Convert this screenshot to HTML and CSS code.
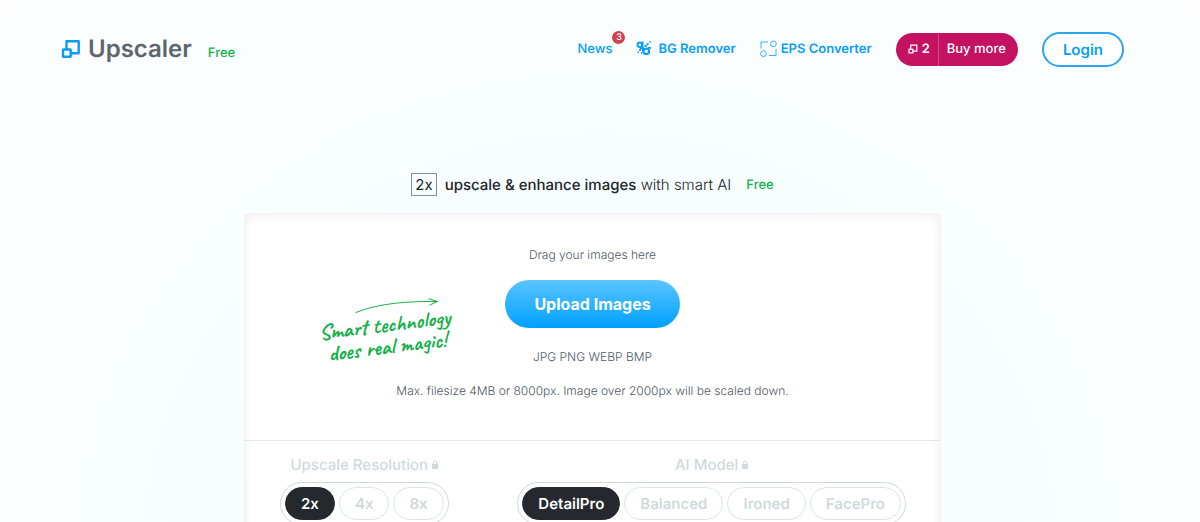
FILE: index.html
```
<!DOCTYPE html>
<html lang="en">

	<head>
		<meta charset="utf-8">
		<meta name="viewport" content="width=device-width, initial-scale=1">
		<title>Upscaler</title>
		<link rel="stylesheet" href="styles.css">
	</head>

	<body>

		<header class="header">
			<a class="logo" href="#">
				<svg class="logo-icon" viewBox="0 0 20 20" width="20" height="20" fill="none" stroke="currentColor" stroke-width="2.4" stroke-linejoin="round" aria-hidden="true">
					<path d="M5.500 10.500V2.300h12.200v12H9.700"/>
					<rect x="2" y="10.500" width="7.700" height="7.200" rx=".5"/>
				</svg>
				<span class="logo-name">Upscaler</span>
				<span class="free">Free</span>
			</a>

			<nav class="nav">
				<a class="nav-link news" href="#">News<span class="badge">3</span></a>
				<a class="nav-link remover" href="#">
					<svg viewBox="0 0 16 18" width="16" height="18" fill="none" stroke="currentColor" aria-hidden="true">
						<circle cx="3.800" cy="4.800" r="2.300" stroke-width="1.900"/>
						<circle cx="10.300" cy="11.300" r="2.800" stroke-width="2.100"/>
						<path d="M6.600 1.500V11M4 8.200h4" stroke-width="1.800"/>
						<path d="M8.500 5h2v2h-2zM10.500 3.200h2v2h-2zM13.200 1h1.500v1.500h-1.500zM12 7h3v1.800h-3zM3 8.800h2v2H3zM1.500 11.500H3V13H1.500zM5 12h1.500v1.500H5z" fill="currentColor" stroke="none"/>
					</svg>
					BG Remover
				</a>
				<a class="nav-link eps" href="#">
					<svg viewBox="0 0 17 18" width="17" height="18" fill="none" stroke="currentColor" stroke-width=".8" aria-hidden="true">
						<circle cx="13.400" cy="3.800" r="2.900"/>
						<circle cx="3.500" cy="13.600" r="2.900"/>
						<path d="M1 8.500v-6.500h7M16 9v6.500H9"/>
					</svg>
					EPS Converter
				</a>
				<a class="buy" href="#">
					<span class="credits">
						<svg viewBox="0 0 20 20" width="10" height="10" fill="none" stroke="currentColor" stroke-width="2.400" aria-hidden="true">
							<path d="M5.500 10.500V2.300h12.200v12H9.700"/>
							<rect x="2" y="10.500" width="7.700" height="7.200"/>
						</svg>
						2
					</span>
					<span class="buy-text">Buy more</span>
				</a>
				<a class="login" href="#">Login</a>
			</nav>
		</header>

		<main class="main">
			<h1 class="title">
				<span class="factor">2x</span>
				<span class="tagline"><strong>upscale &amp; enhance images</strong> with smart AI</span>
				<span class="free">Free</span>
			</h1>

			<form class="card">
				<div class="drop">
					<p>Drag your images here</p>
					<button class="upload" type="button">Upload Images</button>
					<p>JPG PNG WEBP BMP</p>
					<p>Max. filesize 4MB or 8000px. Image over 2000px will be scaled down.</p>

					<div class="magic">
						<svg viewBox="0 0 84 16" width="84" height="16" fill="none" stroke="currentColor" stroke-linecap="round" aria-hidden="true">
							<path d="M1 14.500C19 7 45 3 82 3.500M74 .8l8.500 2.700-7.500 3.500"/>
						</svg>
						<p class="magic-text">Smart technology<br>does real magic!</p>
					</div>
				</div>

				<div class="options">
					<div class="option" role="radiogroup" aria-labelledby="resolution">
						<h2 class="option-name" id="resolution">
							Upscale Resolution
							<svg viewBox="0 0 6 10" width="6" height="10" aria-hidden="true"><path d="M0 4h6v5H0z" fill="currentColor"/><path d="M1.300 4V2.800a1.700 1.700 0 0 1 3.400 0V4" fill="none" stroke="currentColor"/></svg>
						</h2>
						<div class="pills">
							<label class="pill"><input type="radio" name="resolution" checked><span>2x</span></label>
							<label class="pill"><input type="radio" name="resolution" disabled><span>4x</span></label>
							<label class="pill"><input type="radio" name="resolution" disabled><span>8x</span></label>
						</div>
					</div>

					<div class="option" role="radiogroup" aria-labelledby="model">
						<h2 class="option-name" id="model">
							AI Model
							<svg viewBox="0 0 6 10" width="6" height="10" aria-hidden="true"><path d="M0 4h6v5H0z" fill="currentColor"/><path d="M1.300 4V2.800a1.700 1.700 0 0 1 3.400 0V4" fill="none" stroke="currentColor"/></svg>
						</h2>
						<div class="pills">
							<label class="pill"><input type="radio" name="model" checked><span>DetailPro</span></label>
							<label class="pill"><input type="radio" name="model" disabled><span>Balanced</span></label>
							<label class="pill"><input type="radio" name="model" disabled><span>Ironed</span></label>
							<label class="pill"><input type="radio" name="model" disabled><span>FacePro</span></label>
						</div>
					</div>
				</div>
			</form>
		</main>

	</body>

</html>
```

FILE: styles.css
```
* {margin:0; padding:0; box-sizing:border-box;}
body {min-height:100vh; padding-right:15px; font:12px/20px Inter,"Liberation Sans",sans-serif; text-rendering:geometricPrecision; color:#4e5863; background:#fff radial-gradient(ellipse at 50% 100%, #f6fdff 0%, #f9feff 60%, #fefeff 100%);}
a {color:#0a9df8; text-decoration:none;}
svg {flex:none;}
.free {font-size:13px; font-weight:500; color:#16b04a;}

/* header */
.header {display:flex; align-items:center; justify-content:space-between; padding:31px 61px 0;}
.logo {display:flex; align-items:baseline;}
.logo-icon {align-self:center;}
.logo-name {margin:0 16px 0 7px; font-size:24px; line-height:36px; font-weight:600; color:#5d666f;}
.nav {display:flex; align-items:center; gap:24px;}
.nav-link {display:flex; align-items:center; gap:4px; font-size:13px; font-weight:600;}
.news {position:relative; font-weight:500;}
.remover {gap:6px;}
.badge {position:absolute; top:-8px; right:-13px; width:13px; height:13px; border-radius:50%; background:#cf4453; color:#fff; font-size:9px; line-height:13px; text-align:center;}
.buy {display:flex; height:33px; border-radius:17px; background:#c51162; color:#fff; font-size:13px; line-height:33px;}
.credits {display:flex; align-items:center; gap:4px; padding:0 8px 0 12px; border-right:1px solid #d8478a; font-weight:600;}
.buy-text {padding:0 12px 0 8px; font-weight:500;}
.login {padding:0 19px; border:2px solid #2ba5ef; border-radius:18px; background:#fff; font-size:15px; line-height:31px; font-weight:600;}

/* main */
.main {max-width:697px; margin:106px auto 0;}
.title {display:flex; align-items:center; justify-content:center; font-size:15px; line-height:22px; font-weight:300; color:#22262b;}
.title strong {font-weight:500;}
.factor {padding:0 3px; border:1px solid #878c91; line-height:21px; font-weight:400;}
.tagline {margin:0 15px 0 8px;}
.card {margin-top:17px; border-radius:4px; background:#fff; box-shadow:inset 0 0 12px 1px #eeeced;}

/* drop zone */
.drop {position:relative; padding:32px 20px 39px; border-bottom:1px solid #e4e8e9; text-align:center;}
.drop > p {font-weight:300;}
.drop > p + p {margin-top:14px;}
.upload {display:block; margin:15px auto 19px; padding:0 29px; border:0; border-radius:24px; background:linear-gradient(#5ac5ff,#00a0ff); color:#fff; font:700 16px/48px Inter,"Liberation Sans",sans-serif; cursor:pointer;}
.magic {position:absolute; top:85px; left:76px; color:#16b04a;}
.magic svg {display:block; margin-left:35px;}
.magic-text {font:600 22px/22px Caveat,"Segoe Print",cursive; transform:rotate(-7deg);}

/* options */
.options {display:flex; justify-content:space-between; padding:13px 35px 24px 36px;}
.option-name {display:flex; align-items:center; justify-content:center; gap:4px; margin-bottom:6px; font-size:15px; line-height:22px; font-weight:500; color:#d0dadd;}
.pills {display:flex; gap:4px; padding:4px; border:1px solid #cfd9dc; border-radius:22px;}
.pill {position:relative; display:block;}
.pill input {position:absolute; width:100%; height:100%; opacity:0;}
.pill span {display:block; padding:0 15px; border:1px solid #dce4e6; border-radius:17px; color:#d0dadd; font-size:15px; line-height:31px; font-weight:600;}
.pill input:checked + span {border-color:#25292e; background:#25292e; color:#fff;}
```
